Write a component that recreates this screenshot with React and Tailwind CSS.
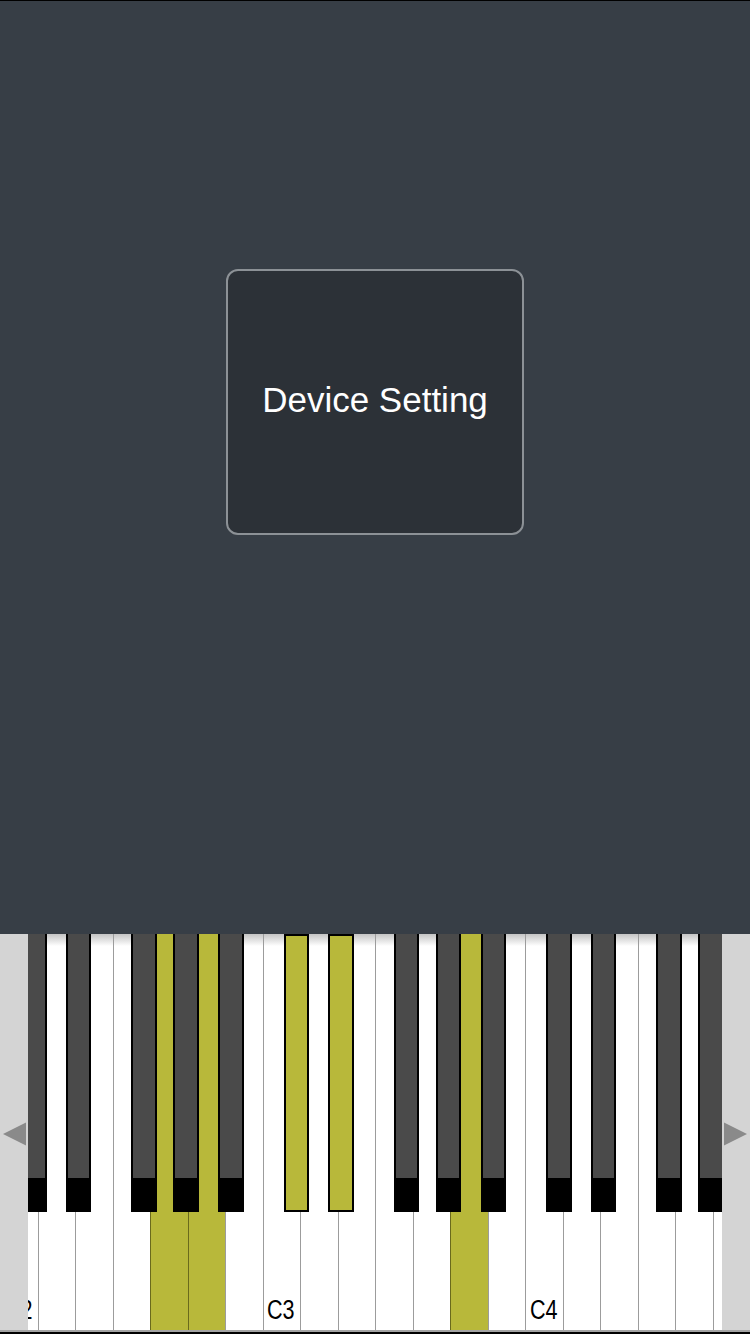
import React from 'react';

const WHITE_W = 37.5;
const OCTAVE_W = WHITE_W * 7;
const START_X = 0.8;

// offsets of the sharps inside one octave, measured from the C key's left edge
const SHARP_OFFSETS = [20.5, 64.9, 130.5, 172.5, 217.2];

const whiteKeys = Array.from({ length: 20 }, (_, i) => ({
    index: i,
    label: i % 7 === 0 ? `C${2 + i / 7}` : null,
    pressed: [4, 5, 12].includes(i),
}));

const blackKeys = [0, 1, 2].flatMap((octave) =>
    SHARP_OFFSETS.map((off, n) => ({
        id: `${octave}-${n}`,
        left: START_X + OCTAVE_W * octave + off,
        pressed: octave === 1 && (n === 0 || n === 1),
    }))
);

const WhiteKey = ({ label, pressed }) => (
    <div
        className={`relative h-full w-[37.5px] shrink-0 border-l-[1.5px] ${
            pressed ? 'bg-[#b8b83a] border-[#6a6a1c]' : 'bg-white border-[#9c9c9c]'
        }`}
    >
        {!pressed && <div className="h-[12px] bg-gradient-to-b from-[#c4c4c4] to-white" />}
        {label && (
            <span className="absolute bottom-[6px] left-[3.5px] origin-left scale-x-[0.8] text-[27px] leading-none text-black font-['Liberation_Sans',Arial,sans-serif]">
                {label}
            </span>
        )}
    </div>
);

const BlackKey = ({ left, pressed }) => (
    <div className="absolute top-0 h-[278px] w-[25.5px]" style={{ left }}>
        {pressed ? (
            <div className="h-full border-2 border-black bg-[#b8b83a]" />
        ) : (
            <div className="flex h-full flex-col border-x-2 border-black bg-[#4a4a4a]">
                <div className="flex-1" />
                <div className="h-[34px] bg-black" />
            </div>
        )}
    </div>
);

const Keyboard = () => (
    <div className="shrink-0">
        <div className="relative h-[396px] overflow-hidden bg-white">
            <div className="flex h-full pl-[0.3px]">
                {whiteKeys.map((k) => (
                    <WhiteKey key={k.index} label={k.label} pressed={k.pressed} />
                ))}
            </div>

            {blackKeys.map((k) => (
                <BlackKey key={k.id} left={k.left} pressed={k.pressed} />
            ))}

            <div className="absolute inset-y-0 left-0 flex w-[28px] items-center bg-[#d4d4d4]">
                <svg width="28" height="24" viewBox="0 0 28 24" className="mt-[3px]">
                    <polygon points="3,12 26,0.5 26,23.5" fill="#8a8a8a" />
                </svg>
            </div>
            <div className="absolute inset-y-0 right-0 flex w-[28px] items-center bg-[#d4d4d4]">
                <svg width="28" height="24" viewBox="0 0 28 24" className="mt-[3px]">
                    <polygon points="2,0.5 25,12 2,23.5" fill="#8a8a8a" />
                </svg>
            </div>
        </div>
        <div className="h-[2px] bg-[#a3a3a3]" />
        <div className="h-[2px] bg-black" />
    </div>
);

const App = () => {
    return (
        <div className="flex h-[1334px] w-[750px] flex-col overflow-hidden bg-[#373e46] font-['Liberation_Sans',Arial,sans-serif]">
            <div className="flex-1 border-t border-black pt-[268px]">
                <button className="mx-auto flex h-[266px] w-[298px] items-center justify-center rounded-[12px] border-2 border-[#8c9196] bg-[#2c3137] pb-[4px] text-[35px] text-white">
                    Device Setting
                </button>
            </div>
            <Keyboard />
        </div>
    );
};

export default App;
